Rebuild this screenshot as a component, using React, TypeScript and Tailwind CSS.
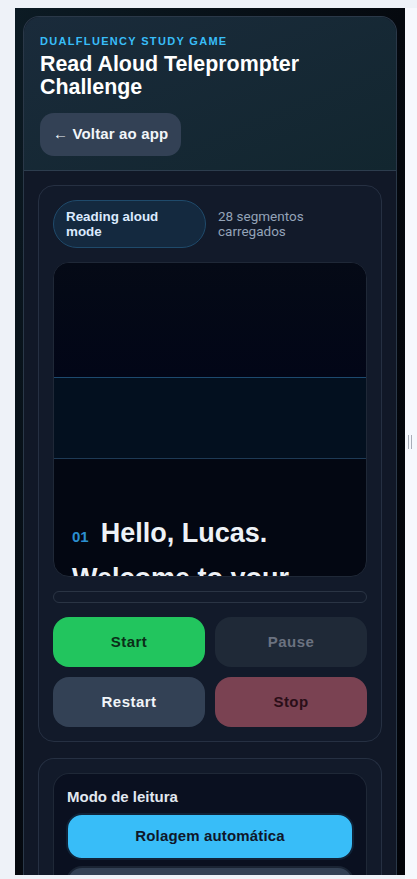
import React from 'react';

const arial = { fontFamily: '"Liberation Sans", Arial, sans-serif' };

const ControlButton: React.FC<{ label: string; className: string }> = ({ label, className }) => (
    <button className={`h-[50px] rounded-2xl text-[15px] font-bold tracking-[0.03em] ${className}`}>
        {label}
    </button>
);

const App: React.FC = () => {
    return (
        <div className="h-[879px] w-[417px] overflow-hidden bg-[#eef2f8] pt-2 flex" style={arial}>
            <div className="w-[15px] flex-shrink-0" />
            <div className="w-[390px] h-[867px] overflow-hidden bg-gradient-to-br from-[#0c1b24] via-[#05090f] to-[#020409] px-2 pt-2">
                <div className="rounded-t-2xl border border-b-0 border-[#2a3848] bg-[#111827]">
                    <header className="rounded-t-2xl bg-gradient-to-br from-[#1a2b3b] to-[#12262f] px-4 pt-[17px] pb-[14px] border-b border-[#2d3d4e]">
                        <p className="text-[11px] font-bold tracking-[0.12em] text-[#38bdf8] leading-[14px]">
                            DUALFLUENCY STUDY GAME
                        </p>
                        <h1 className="mt-[5px] text-[21.4px] font-bold leading-[22.5px] text-white">
                            Read Aloud Teleprompter Challenge
                        </h1>
                        <button className="mt-[15px] h-[43px] px-[13px] rounded-[14px] bg-[#334155] text-[15px] font-bold text-[#f1f5f9] tracking-[0.01em]">
                            ← Voltar ao app
                        </button>
                    </header>

                    <div className="px-[14px] pt-[14px] flex flex-col gap-[16px]">
                        <section className="rounded-2xl border border-[#263042] bg-[#121a2a] p-[14px]">
                            <div className="flex items-center gap-3">
                                <span className="w-[153px] h-[48px] flex-shrink-0 flex items-center rounded-full border border-[#1f4a6b] bg-[#14293f] pl-3 pr-4 text-[13.4px] font-bold leading-[15px] text-[#dbeafe]">
                                    Reading aloud mode
                                </span>
                                <span
                                    className="text-[13.5px] leading-[15px] text-[#94a3b8]"
                                    style={{ fontFamily: 'Roboto, "Liberation Sans", sans-serif' }}
                                >
                                    28 segmentos carregados
                                </span>
                            </div>

                            <div className="mt-[14px] h-[315px] rounded-2xl border border-[#1f2837] bg-[#030712] overflow-hidden flex flex-col">
                                <div className="h-[115px] flex-shrink-0 bg-gradient-to-b from-[#050a16] to-[#020617] border-b border-[#1d4a6e]" />
                                <div className="h-[81px] flex-shrink-0 bg-[#03101f] border-b border-[#1e3a55]" />
                                <div className="pt-[54px] pl-[18px] pr-3 text-[27px] font-bold leading-[40.5px] text-[#eef2f7]">
                                    <span className="text-[15px] text-[#2b8fd0] mr-3">01</span>
                                    Hello, Lucas. Welcome to your reading session today.
                                </div>
                            </div>

                            <div className="mt-[14px] h-[12px] rounded-full border border-[#2a3444]" />

                            <div className="mt-[14px] grid grid-cols-2 gap-[10px]">
                                <ControlButton label="Start" className="bg-[#22c55e] text-[#0b2e18]" />
                                <ControlButton label="Pause" className="bg-[#1f2937] text-[#6b7280]" />
                                <ControlButton label="Restart" className="bg-[#334155] text-[#f1f5f9]" />
                                <ControlButton label="Stop" className="bg-[#7a4252] text-[#2a0e18]" />
                            </div>
                        </section>

                        <section className="rounded-t-2xl border border-b-0 border-[#263042] bg-[#121a2a] px-[14px] pt-[14px] h-[140px]">
                            <div className="rounded-t-2xl border border-b-0 border-[#1f2837] bg-[#0a1020] px-[12px] pt-[13px] h-[130px]">
                                <p className="text-[15px] font-bold leading-[20px] text-[#e2e8f0] pl-px">Modo de leitura</p>
                                <button className="mt-[6px] w-full h-[47px] rounded-2xl bg-[#38bdf8] border-2 border-[#102338] text-[15px] font-bold text-[#0f172a] tracking-[0.01em]">
                                    Rolagem automática
                                </button>
                                <div className="mt-[6px] w-full h-[47px] rounded-2xl bg-[#334155] border-2 border-[#1a2434]" />
                            </div>
                        </section>
                    </div>
                </div>
            </div>
            <div className="flex-1 h-full bg-[#f6f8fd] relative">
                <div className="absolute left-[3px] top-[427px] flex gap-[2px]">
                    <div className="w-px h-[14px] bg-[#a8adb8]" />
                    <div className="w-px h-[14px] bg-[#a8adb8]" />
                </div>
            </div>
        </div>
    );
};

export default App;
